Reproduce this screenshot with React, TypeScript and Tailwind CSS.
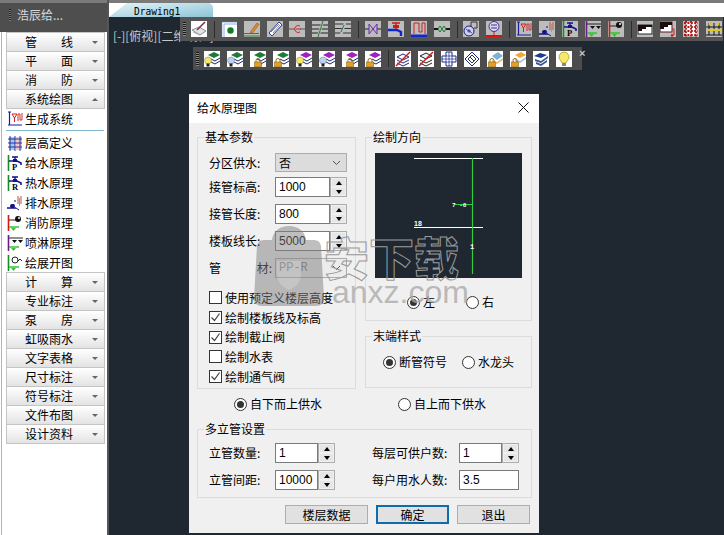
import React from 'react';

const cjk = "font-['Noto_Sans_CJK_SC','Liberation_Sans',sans-serif]";

const Svg: React.FC<{ size?: number; bg?: string; children: React.ReactNode }> = ({ size = 16, bg, children }) => (
  <svg width={size} height={size} viewBox="0 0 16 16" className="shrink-0">
    {bg && <rect width="16" height="16" fill={bg} />}
    {children}
  </svg>
);

const GRAY = '#bcbcbc';

// system icons used in both the side menu and the toolbar
const SystemIcon = ({ bg }: { bg?: string }) => (
  <Svg bg={bg}>
    <path d="M1 1h3M2.5 1v13M1 14h14" stroke="#1d1d9c" strokeWidth="1.2" fill="none" />
    <path d="M5 3h5L7.5 7zM7.5 7v4" stroke="#c22" fill="none" />
    <path d="M11 10V3h2v6h2V2" stroke="#c33" fill="none" />
  </Svg>
);
const TapIcon = ({ letter, bg }: { letter: string; bg?: string }) => (
  <Svg bg={bg}>
    <path d="M1.5 0v16" stroke="#1a8a2a" strokeWidth="1.6" />
    <path d="M2 6h8l4 2v2" stroke="#12128c" strokeWidth="1.6" fill="none" />
    <path d="M5 2h6M8 2v4" stroke="#12128c" strokeWidth="1.4" />
    <rect x="6" y="4" width="4" height="3" fill="#12128c" />
    <text x="5" y="15" fontSize="8.5" fontWeight="700" fontFamily="Liberation Serif" fill="#000">{letter}</text>
  </Svg>
);
const DrainIcon = ({ bg }: { bg?: string }) => (
  <Svg bg={bg}>
    <path d="M0 13h9M6 9v4" stroke="#12128c" strokeWidth="1.6" />
    <rect x="3" y="9" width="5" height="4" rx="2" fill="#12128c" />
    <path d="M9 13l3 2M8 7V5" stroke="#12128c" />
    <path d="M11 9V1M14 9V1" stroke="#b54" />
    <path d="M12.5 11V3" stroke="#c88" />
  </Svg>
);
const SprayIcon = ({ bg }: { bg?: string }) => (
  <Svg bg={bg}>
    <path d="M1.5 0v16" stroke="#6a1a8a" strokeWidth="1.6" />
    <path d="M2 3h14" stroke="#222" />
    <path d="M5 5h5l-2.5 3zM11 5h5l-2.5 3z" fill="#111" />
    <path d="M2 12h10" stroke="#35c435" strokeWidth="1.5" />
    <path d="M4 13h5l-2.5 3z" fill="#35c435" />
  </Svg>
);
const FireIcon = ({ bg }: { bg?: string }) => (
  <Svg bg={bg}>
    <path d="M1.5 0v16" stroke="#d01818" strokeWidth="1.6" />
    <path d="M2 5h7" stroke="#222" />
    <circle cx="11" cy="4" r="3" fill="#111" />
    <circle cx="12" cy="3" r="1" fill="#fff" />
    <path d="M2 12h10" stroke="#35c435" strokeWidth="1.5" />
    <path d="M4 13h5l-2.5 3z" fill="#35c435" />
  </Svg>
);

const topIcons: React.ReactNode[][] = [
  [
    <Svg bg="#fff" key="a">
      <path d="M1 9l7-3 7 4-6 4z" fill="#dfe6e6" stroke="#667" strokeWidth=".7" />
      <path d="M6 9l8-8" stroke="#8a2a4a" strokeWidth="1.6" />
      <path d="M2 11l7 3" stroke="#aaa" />
    </Svg>,
  ],
  [
    <Svg bg="#fff" key="a">
      <path d="M.5 16V.5H16" stroke="#2a6ac0" strokeWidth="1.4" fill="none" />
      <path d="M3 16V3h13" stroke="#8ab0e0" fill="none" />
      <circle cx="9.5" cy="9.5" r="3.2" fill="#127a26" />
    </Svg>,
    <Svg bg={GRAY} key="b">
      <path d="M7 10l6-8 2 1.5-6 8-3 1z" fill="#e08a2a" stroke="#7a4a1a" strokeWidth=".5" />
      <path d="M0 12.5h15" stroke="#c83a1a" />
      <path d="M0 15h16" stroke="#2a8a2a" />
    </Svg>,
    <Svg bg={GRAY} key="c">
      <path d="M2 12L12 1l3 3L5 15z" fill="#fff" stroke="#2a3a9a" />
      <path d="M4 11l8-8M6 12l7-8" stroke="#556" strokeWidth=".7" />
    </Svg>,
    <Svg bg={GRAY} key="d">
      <path d="M0 8h6M11 8h5" stroke="#555" />
      <path d="M11 5a3.5 3.5 0 1 0 0 6M7 8h5" stroke="#c22" fill="none" />
    </Svg>,
    <Svg bg={GRAY} key="e">
      <path d="M0 4h16M0 8h16M0 12h16" stroke="#222" />
      <path d="M6 16L11 0" stroke="#bcbcbc" strokeWidth="2.4" />
      <path d="M6 16L11 0" stroke="#2a7a3a" />
    </Svg>,
    <Svg bg={GRAY} key="f">
      <path d="M0 3h16M0 7.5h16M0 12h16" stroke="#333" />
      <path d="M6 14l4-12" stroke="#bcbcbc" strokeWidth="2.4" />
      <path d="M6 11l3-7" stroke="#2a7a3a" />
    </Svg>,
  ],
  [
    <Svg bg={GRAY} key="a">
      <path d="M0 8h4M12 8h4" stroke="#222" />
      <path d="M4 3l8 10V3L4 13z" fill="none" stroke="#6a2ab0" />
    </Svg>,
    <Svg bg={GRAY} key="b">
      <path d="M0 9h9l4 2v4" stroke="#1226d0" strokeWidth="2.4" fill="none" />
      <path d="M4 2h8M8 2v6" stroke="#d01818" strokeWidth="1.6" />
      <rect x="5" y="4" width="6" height="3" fill="#d01818" />
    </Svg>,
    <Svg bg={GRAY} key="c">
      <path d="M0 15h16" stroke="#1226d0" strokeWidth="3" />
      <path d="M3 13V2h5v9h3V2h3v11" stroke="#c22" fill="none" />
    </Svg>,
    <Svg bg={GRAY} key="d">
      <path d="M0 8h4M12 8h4" stroke="#111" strokeWidth="2" />
      <path d="M4 8l2-3 2 3-2 3zM8 8l2-3 2 3-2 3z" fill="none" stroke="#1a7a3a" />
    </Svg>,
  ],
  [
    <Svg bg={GRAY} key="a">
      <circle cx="6" cy="10" r="5" fill="#cfd3ea" stroke="#1a1a8a" />
      <path d="M4 10h4M6 8v4M3 8l6 4" stroke="#1a1a8a" strokeWidth=".7" />
      <path d="M8 6V1h6v6h-3" stroke="#333" fill="none" />
    </Svg>,
    <Svg bg={GRAY} key="b">
      <circle cx="8" cy="5.5" r="5" fill="#d8d8ee" stroke="#4a2a9a" />
      <path d="M5 4h6M5 7h6" stroke="#4a2a9a" />
      <path d="M8 11v3" stroke="#b22" />
      <path d="M0 15h16" stroke="#e01010" strokeWidth="2" />
    </Svg>,
  ],
  [
    <SystemIcon bg={GRAY} key="a" />,
    <DrainIcon bg={GRAY} key="b" />,
    <TapIcon letter="P" bg={GRAY} key="c" />,
    <SprayIcon bg={GRAY} key="d" />,
    <FireIcon bg={GRAY} key="e" />,
  ],
  [
    <Svg bg={GRAY} key="a">
      <rect x="1" y="4" width="14" height="9" fill="#fff" stroke="#222" />
      <path d="M1 13v-3h4V8h4V6h6V4H1z" fill="#1c0c0c" />
    </Svg>,
    <Svg bg={GRAY} key="b">
      <rect x="0" y="1" width="12" height="10" fill="#fff" stroke="#5a1a1a" />
      <path d="M0 11V8h4V6h4V4h4V1H0z" fill="#1c0c0c" />
      <path d="M12 8h2v6h-3" stroke="#c22" fill="none" />
      <circle cx="12" cy="14.5" r="1.2" fill="#c22" />
    </Svg>,
    <Svg bg={GRAY} key="c">
      <path d="M2 1h12v14H2z" fill="#fff" />
      <path d="M1 2h14M1 6h14M1 10h14M1 14h14M3 0v16M8 0v16M13 0v16" stroke="#b01818" strokeWidth="1.8" strokeDasharray="2 1.4" />
    </Svg>,
    <Svg bg={GRAY} key="d">
      <path d="M0 6h16M0 14h16" stroke="#111" />
      <path d="M3 2v12M8 2v12M13 2v12" stroke="#111" />
      <path d="M1 9h14" stroke="#e0c820" strokeWidth="2" />
      <circle cx="4" cy="3" r="1.4" fill="#e0c820" />
      <circle cx="12" cy="3" r="1.4" fill="#e0c820" />
    </Svg>,
  ],
];

const Bulb = ({ c, x = 0 }: { c: string; x?: number }) => (
  <g transform={`translate(${x} 6)`}>
    <circle cx="4" cy="3.5" r="3.5" fill={c} stroke="#665" strokeWidth=".4" />
    <rect x="2.5" y="6.5" width="3" height="3" fill="#222" />
  </g>
);
const Lock = ({ x = 1 }: { x?: number }) => (
  <g transform={`translate(${x} 8)`}>
    <path d="M2 3V1.5a2 2 0 0 1 4 0V3" stroke="#8a6a20" fill="none" />
    <rect x="0.5" y="3" width="7" height="5" fill="#e0a030" stroke="#7a5a10" strokeWidth=".5" />
  </g>
);
const LayerIcon = ({ color, bulb, lock }: { color: string; bulb?: string; lock?: number }) => (
  <Svg bg="#fff">
    <path d="M4 4l6-3 6 3-6 3z" fill={color} />
    <path d="M7 8l4 2 5-3M7 11l4 2 5-3" stroke="#1a2a6a" fill="none" />
    {bulb && <Bulb c={bulb} />}
    {lock !== undefined && <Lock x={lock} />}
  </Svg>
);

const GREEN = '#1e7a3a';
const PURPLE = '#a020c0';

const secondIcons: React.ReactNode[][] = [
  [
    <LayerIcon key="1" color={GREEN} bulb="#f4e66a" />,
    <LayerIcon key="2" color={GREEN} bulb="#bcd0f4" />,
    <LayerIcon key="3" color={GREEN} lock={4} />,
    <LayerIcon key="4" color={GREEN} lock={1} />,
    <LayerIcon key="5" color={PURPLE} bulb="#f4e66a" />,
    <LayerIcon key="6" color={PURPLE} bulb="#bcd0f4" />,
    <LayerIcon key="7" color={PURPLE} lock={4} />,
    <LayerIcon key="8" color={PURPLE} lock={1} />,
  ],
  [
    <Svg bg="#fff" key="a">
      <path d="M2 6l6-3 6 3-6 3zM2 9l6 3 6-3M2 12l6 3 6-3" stroke="#1a2a7a" fill="none" />
      <path d="M1 15L15 1" stroke="#d81818" strokeWidth="1.5" />
    </Svg>,
    <Svg bg="#fff" key="b">
      <path d="M2 5l6-3 6 3-6 3z" fill="#eee" stroke="#222" />
      <path d="M2 9l6 3 6-3M2 12l6 3 6-3" stroke="#222" fill="none" />
      <path d="M1 15L15 1" stroke="#d81818" strokeWidth="1.5" />
    </Svg>,
    <Svg bg="#fff" key="c">
      <path d="M5 1h6v4h4v6h-4v4H5v-4H1V5h4z" fill="none" stroke="#1a2a8a" />
      <path d="M5 5h6v6H5zM1 8h14M8 1v14" stroke="#1a2a8a" strokeWidth=".7" fill="none" />
    </Svg>,
    <Svg bg="#fff" key="d">
      <path d="M1 8l7-7 7 7-7 7z" fill="none" stroke="#1a2a7a" />
      <path d="M4 8l4-4 4 4-4 4zM6 6l4 4" stroke="#334" fill="none" />
    </Svg>,
    <Svg bg="#fff" key="e">
      <path d="M5 5l6-4 5 4-6 4z" fill="#7fb0d8" />
      <path d="M5 9l5 2 6-4v2l-6 4-5-2z" fill="#e8b870" />
      <Lock x={1} />
    </Svg>,
    <Svg bg="#fff" key="f">
      <path d="M5 4l6-3 5 3-6 3z" fill="#f0a830" />
      <path d="M5 8l5 2 6-4v2l-6 4-5-2z" fill="#a8c0d8" />
      <Lock x={1} />
    </Svg>,
    <Svg bg="#fff" key="g">
      <path d="M1 5l6-3 7 2-6 3z" fill="#1c3c8c" />
      <path d="M2 8l6 2 7-5v2l-7 5-6-2zM3 11l5 2 6-4v2l-6 4-5-2z" fill="#34568c" />
    </Svg>,
    <Svg bg="#fff" key="h">
      <path d="M8 1a5 5 0 0 1 3 9l-1 2H6l-1-2a5 5 0 0 1 3-9z" fill="#f6ea6e" stroke="#a89020" strokeWidth=".7" />
      <rect x="6" y="12" width="4" height="3" fill="#888" />
    </Svg>,
  ],
];

const Grip = () => (
  <div className="h-[14px] w-[3px] shrink-0 bg-[repeating-linear-gradient(to_bottom,#161616_0,#161616_1px,#8a8a8a_1px,#8a8a8a_2px)]" />
);

const Toolbar: React.FC<{ groups: React.ReactNode[][]; className: string; gap: string; children?: React.ReactNode }> = ({ groups, className, gap, children }) => (
  <div className={`absolute flex items-center ${className}`}>
    <div className="ml-[3px] mr-[5px]">
      <Grip />
    </div>
    <div className={`flex items-center ${gap}`}>
      {groups.map((icons, i) => (
        <React.Fragment key={i}>
          {i > 0 && <div className="-mr-px h-[17px] w-px bg-[#2c2c2c]" />}
          {icons}
        </React.Fragment>
      ))}
    </div>
    {children}
  </div>
);

const Spread = ({ text }: { text: string }) => (
  <span className="flex w-12 justify-between">
    {[...text].map((c, i) => (
      <span key={i}>{c}</span>
    ))}
  </span>
);

const MenuButton = ({ label, open }: { label: string; open?: boolean }) => (
  <div className="-mt-px flex h-5 w-[99px] items-center border border-[#c4c4c4] bg-gradient-to-b from-white to-[#e3e3e3] pl-[18px] text-[12px] text-black">
    <Spread text={label} />
    {open ? (
      <span className="ml-auto mr-[6px] h-0 w-0 border-x-[3px] border-b-[3px] border-x-transparent border-b-[#666]" />
    ) : (
      <span className="ml-auto mr-[6px] h-0 w-0 border-x-[3px] border-t-[3px] border-x-transparent border-t-[#666]" />
    )}
  </div>
);

const MenuItem = ({ icon, label }: { icon: React.ReactNode; label: string }) => (
  <div className="flex h-5 items-center text-[12px] text-black">
    <span className="ml-[2px] mr-[2px] flex w-4 justify-center">{icon}</span>
    <span>{label}</span>
  </div>
);

const Sidebar = () => (
  <aside className="flex h-full w-[109px] shrink-0 flex-col border-r-2 border-[#555] bg-white">
    <div className="h-[3px] bg-[#7a7a7a]" />
    <div className="flex h-[29px] items-center bg-[#4e4e4e] pb-[6px] pl-[9px] text-[12px] text-[#d8d8d8]">
      <div className="mr-[6px] h-[12px] w-[2px] bg-[repeating-linear-gradient(to_bottom,#222_0,#222_1px,#777_1px,#777_2px)]" />
      浩辰给...
    </div>
    <div className="ml-px flex flex-1 border-l border-[#b4b4b4] pl-1 pt-px">
      <div className="flex w-full flex-col">
        {['管线', '平面', '消防'].map((l) => (
          <MenuButton key={l} label={l} />
        ))}
        <MenuButton label="系统绘图" open />
        <div className="-ml-px">
          <MenuItem label="生成系统" icon={<SystemIcon />} />
          <div className="ml-[1px] mt-[1px] h-px w-[98px] bg-[#7fb8d0]" />
          <div className="mt-[2px]" />
          <MenuItem
            label="层高定义"
            icon={
              <Svg>
                <rect x="2" y="2" width="6" height="13" fill="#a8c4e8" />
                <rect x="9" y="2" width="6" height="13" fill="#f0c8c8" />
                <path d="M1 4h14M1 8h14M1 12h14M3 1v15M8 1v15M13 1v15" stroke="#1a2a9a" strokeWidth=".9" />
              </Svg>
            }
          />
          <MenuItem label="给水原理" icon={<TapIcon letter="P" />} />
          <MenuItem label="热水原理" icon={<TapIcon letter="R" />} />
          <MenuItem label="排水原理" icon={<DrainIcon />} />
          <MenuItem label="消防原理" icon={<FireIcon />} />
          <MenuItem label="喷淋原理" icon={<SprayIcon />} />
          <MenuItem
            label="绘展开图"
            icon={
              <Svg>
                <path d="M1.5 0v16" stroke="#1a8a2a" strokeWidth="1.6" />
                <circle cx="8" cy="5" r="3" fill="none" stroke="#222" />
                <path d="M11 6l2-2 2 2" stroke="#222" fill="none" />
                <path d="M2 12h10" stroke="#35c435" strokeWidth="1.5" />
                <path d="M4 13h5l-2.5 3z" fill="#35c435" />
              </Svg>
            }
          />
        </div>
        {['计算', '专业标注', '泵房', '虹吸雨水', '文字表格', '尺寸标注', '符号标注', '文件布图', '设计资料'].map((l) => (
          <MenuButton key={l} label={l} />
        ))}
      </div>
    </div>
  </aside>
);

const GroupBox: React.FC<{ title: string; className?: string; children: React.ReactNode }> = ({ title, className = '', children }) => (
  <div className={`relative border border-[#dcdcdc] ${className}`}>
    <span className="absolute -top-[9px] left-[6px] bg-[#f0f0f0] px-px text-[12px] leading-[16px]">{title}</span>
    {children}
  </div>
);

const Spin = () => (
  <div className="flex w-[17px] shrink-0 flex-col gap-[2px] border border-[#acacac] bg-[#f0f0f0] px-[1px] py-[1px]">
    <div className="flex flex-1 items-center justify-center bg-[#e6e6e6]">
      <span className="h-0 w-0 border-x-[3.5px] border-b-[4px] border-x-transparent border-b-black" />
    </div>
    <div className="flex flex-1 items-center justify-center bg-[#e6e6e6]">
      <span className="h-0 w-0 border-x-[3.5px] border-t-[4px] border-x-transparent border-t-black" />
    </div>
  </div>
);

const NumberField = ({ value, w = 'w-[72px]', spin = true }: { value: string; w?: string; spin?: boolean }) => (
  <div className={`flex h-5 ${w} shrink-0`}>
    <div className="flex min-w-0 flex-1 items-center border border-[#7a7a7a] bg-white pl-[3px] font-['Liberation_Sans',sans-serif] text-[12px]">
      {value}
    </div>
    {spin && <Spin />}
  </div>
);

const FormRow: React.FC<{ label: React.ReactNode; className?: string; children: React.ReactNode }> = ({ label, className = '', children }) => (
  <div className={`flex items-center text-[12px] ${className}`}>
    <span className="flex w-[66px] shrink-0">{label}</span>
    {children}
  </div>
);

const SelectBox = ({ value, muted }: { value: string; muted?: boolean }) => (
  <div className={`flex h-full w-[72px] items-center justify-between border border-[#acacac] pl-[3px] pr-[5px] text-[12px] ${muted ? "bg-[#ececec] font-['Liberation_Mono',monospace] text-[#8a8a8a]" : 'bg-[#dcdcdc]'}`}>
    {value}
    <svg width="9" height="6" viewBox="0 0 9 6">
      <path d="M1 1l3.5 3.5L8 1" fill="none" stroke="#555" />
    </svg>
  </div>
);

const Check = ({ label, on }: { label: string; on?: boolean }) => (
  <div className="flex h-[19.7px] items-center text-[12px]">
    <span className="mr-[3px] flex h-[13px] w-[13px] items-center justify-center border border-[#333] bg-white">
      {on && (
        <svg width="11" height="11" viewBox="0 0 11 11">
          <path d="M1.5 5.5l3 3 5-7" fill="none" stroke="#444" strokeWidth="1.2" />
        </svg>
      )}
    </span>
    {label}
  </div>
);

const Radio = ({ label, on, className = '' }: { label: string; on?: boolean; className?: string }) => (
  <div className={`flex items-center text-[12px] ${className}`}>
    <span className="mr-[3px] flex h-[13px] w-[13px] items-center justify-center rounded-full border border-[#333] bg-white">
      {on && <span className="h-[7px] w-[7px] rounded-full bg-[#333]" />}
    </span>
    {label}
  </div>
);

const DlgButton = ({ label, primary, w }: { label: string; primary?: boolean; w: string }) => (
  <div className={`flex h-[19px] ${w} items-center justify-center text-[12px] ${primary ? 'border-2 border-[#0f6cb0] bg-[#e1e1e1]' : 'border border-[#adadad] bg-[#e1e1e1]'}`}>
    {label}
  </div>
);

const Preview = () => (
  <svg width="147" height="125" viewBox="0 0 147 125" className="block bg-[#1f2730]">
    <path d="M39 5.5h69M39 74.5h69" stroke="#fff" />
    <path d="M97.5 5v116" stroke="#2ecc40" strokeWidth="1.2" />
    <path d="M79 51.5h18" stroke="#2ecc40" />
    <text x="77" y="54" fontSize="6" fontWeight="700" fill="#fff" fontFamily="Liberation Mono">7 -6</text>
    <text x="39" y="73" fontSize="7" fontWeight="700" fill="#fff" fontFamily="Liberation Sans">18</text>
    <text x="95" y="96" fontSize="7" fontWeight="700" fill="#fff" fontFamily="Liberation Mono">1</text>
  </svg>
);

const Dialog = () => (
  <div className={`absolute left-[81px] top-[94px] h-[439px] w-[350px] bg-[#f0f0f0] text-black ${cjk}`}>
    <div className="flex h-[29px] items-center justify-between bg-white pb-[2px] pl-2 pr-[10px] text-[12px]">
      给水原理图
      <svg width="11" height="11" viewBox="0 0 11 11">
        <path d="M.5.5l10 10M10.5.5l-10 10" stroke="#111" />
      </svg>
    </div>
    <div className="px-2 pt-[14px]">
      <div className="grid grid-cols-[159px_167px] gap-x-[9px]">
        <GroupBox title="基本参数" className="h-[252px] pl-[11px] pt-[15px]">
          <FormRow label="分区供水:" className="mb-[5px] h-[19px]">
            <SelectBox value="否" />
          </FormRow>
          <FormRow label="接管标高:" className="mb-[7px]">
            <NumberField value="1000" />
          </FormRow>
          <FormRow label="接管长度:" className="mb-[7px]">
            <NumberField value="800" />
          </FormRow>
          <FormRow label="楼板线长:" className="mb-[7px]">
            <NumberField value="5000" />
          </FormRow>
          <FormRow
            label={
              <span className="flex w-[63px] justify-between">
                <span>管</span>
                <span>材:</span>
              </span>
            }
            className="mb-[10px] h-5"
          >
            <SelectBox value="PP-R" muted />
          </FormRow>
          <Check label="使用预定义楼层高度" />
          <Check label="绘制楼板线及标高" on />
          <Check label="绘制截止阀" on />
          <Check label="绘制水表" />
          <Check label="绘制通气阀" on />
        </GroupBox>
        <div>
          <GroupBox title="绘制方向" className="h-[184px] pl-[9px] pt-[15px]">
            <Preview />
            <div className="mt-[15px] flex pl-[32px]">
              <Radio label="左" on />
              <Radio label="右" className="ml-[31px]" />
            </div>
          </GroupBox>
          <GroupBox title="末端样式" className="mt-[15px] flex h-[52px] items-center pl-[17px]">
            <Radio label="断管符号" on />
            <Radio label="水龙头" className="ml-[15px]" />
          </GroupBox>
        </div>
      </div>
      <div className="grid h-[40px] grid-cols-[159px_167px] gap-x-[9px] pb-[10px]">
        <Radio label="自下而上供水" on className="pl-[37px]" />
        <Radio label="自上而下供水" className="pl-[33px]" />
      </div>
      <GroupBox title="多立管设置" className="flex h-[69px] w-[335px] pl-[11px] pt-[13px]">
        <div className="flex w-[163px] shrink-0 flex-col gap-[7px]">
          <FormRow label="立管数量:">
            <NumberField value="1" w="w-[60px]" />
          </FormRow>
          <FormRow label="立管间距:">
            <NumberField value="10000" w="w-[60px]" />
          </FormRow>
        </div>
        <div className="flex flex-col gap-[7px]">
          <div className="flex items-center text-[12px]">
            <span className="w-[87px] shrink-0">每层可供户数:</span>
            <NumberField value="1" w="w-[60px]" />
          </div>
          <div className="flex items-center text-[12px]">
            <span className="w-[87px] shrink-0">每户用水人数:</span>
            <NumberField value="3.5" w="w-[60px]" spin={false} />
          </div>
        </div>
      </GroupBox>
      <div className="mt-[7px] flex w-[333px] justify-end gap-2">
        <DlgButton label="楼层数据" w="w-[83px]" />
        <DlgButton label="确定" primary w="w-[73px]" />
        <DlgButton label="退出" w="w-[73px]" />
      </div>
    </div>
  </div>
);

// site watermark lying over the dialog
const Watermark = () => (
  <div className={`pointer-events-none absolute left-[146px] top-[225px] h-[85px] w-[230px] ${cjk}`}>
    <svg width="70" height="81" viewBox="0 0 70 81" className="absolute left-0 top-0 opacity-50">
      <path d="M10 15h8C19 6 26 1 35 1s16 5 17 14h8q6 0 7 6l3 52q0 8-8 8H8q-8 0-8-8l3-52q1-6 7-6z" fill="#808080" />
      <path d="M23 36h24v13q0 11-12 16-12-5-12-16z" fill="#9c9c9c" />
    </svg>
    <span className="absolute left-[70px] top-[3px] text-[45px] font-black leading-[58px] text-transparent [-webkit-text-stroke:1px_#999]">
      安下载
    </span>
    <span className="absolute left-[78px] top-[47px] font-['Liberation_Sans',sans-serif] text-[32px] leading-[40px] text-[#aaaaaa]/80">
      anxz.com
    </span>
  </div>
);

export default function App() {
  return (
    <div className={`flex h-[535px] w-[724px] overflow-hidden ${cjk}`}>
      <Sidebar />
      <main className="flex min-w-0 flex-1 flex-col bg-[#1f2730]">
        <div className="h-[3px] bg-[#7a7a7a]" />
        <div className="flex h-[14px] bg-white">
          <div className="flex w-[104px] items-center rounded-tr-[5px] bg-gradient-to-br from-[#e4f4f6] to-[#8cc4d8] pl-[25px] pt-[5px] font-['DejaVu_Sans_Mono',monospace] text-[9.6px] text-black [clip-path:polygon(18px_0,100%_0,100%_100%,0_100%)]">
            Drawing1
          </div>
        </div>
        <div className="relative flex-1">
          <span className="absolute left-[4px] top-[11px] text-[12px] leading-[16px] text-[#c8c8c8]">[-][俯视][二维线框]</span>
          <Toolbar groups={topIcons} gap="gap-[6.9px]" className="left-[71px] top-0 h-[24px] w-[543px] bg-[#555]" />
          <Toolbar groups={secondIcons} gap="gap-[7px]" className="left-[84px] top-[30px] h-[23px] w-[389px] bg-[#4c4c4c]">
            <span className="ml-[7px] self-start font-['Liberation_Sans',sans-serif] text-[11px] font-bold leading-[12px] text-[#c4c4c4]">×</span>
          </Toolbar>
        </div>
      </main>
      <div className="absolute left-[108px] top-0 h-[535px] w-[616px]">
        <Dialog />
        <Watermark />
      </div>
    </div>
  );
}
